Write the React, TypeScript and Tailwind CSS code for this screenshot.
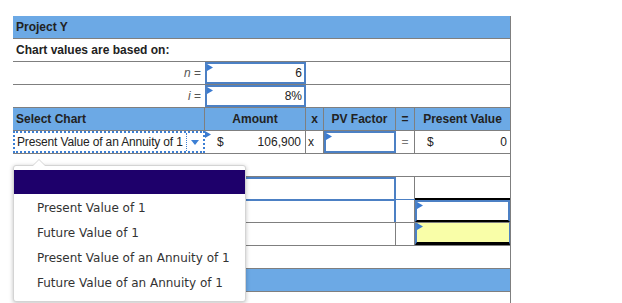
import React from "react";

const cols = "grid grid-cols-[192px_101px_18px_72px_19px_95px]";

function Flag() {
  return (
    <svg className="absolute left-0 top-0" width="6" height="7" viewBox="0 0 6 7">
      <path d="M0 0 L6 3.5 L0 7 Z" fill="#3b7bd0" />
    </svg>
  );
}

function Input({ children, className = "" }: { children?: React.ReactNode; className?: string }) {
  return (
    <div className={"relative h-full border-2 border-[#4c80c4] flex items-center justify-end pr-[2px] " + className}>
      <Flag />
      {children}
    </div>
  );
}

export default function App() {
  const options = [
    "Present Value of 1",
    "Future Value of 1",
    "Present Value of an Annuity of 1",
    "Future Value of an Annuity of 1",
  ];

  return (
    <div className="w-[622px] h-[303px] overflow-hidden bg-white pt-[16px] pl-[13px] text-[12px] text-[#222] font-['Liberation_Sans',Arial,sans-serif]">
      <div className="relative w-[498px] border-r border-[#7f7f7f]">
        <div className="h-[23px] bg-[#6ca9e5] border-b border-[#7f7f7f] flex items-center pl-[3px] font-bold">
          Project Y
        </div>
        <div className="h-[23px] border-b border-[#7f7f7f] flex items-center pl-[3px] font-bold">
          Chart values are based on:
        </div>
        <div className="h-[23px] border-b border-[#7f7f7f] flex">
          <div className="w-[192px] flex items-center justify-end pr-[4px] text-[#555]">
            <i>n</i>&nbsp;=
          </div>
          <Input className="w-[101px] -mb-px">6</Input>
        </div>
        <div className="h-[23px] border-b border-[#7f7f7f] flex">
          <div className="w-[192px] flex items-center justify-end pr-[4px] text-[#555]">
            <i>i</i>&nbsp;=
          </div>
          <Input className="w-[101px] -mb-px">8%</Input>
        </div>

        <div className={cols + " h-[23px] bg-[#6ca9e5] border-b border-[#7f7f7f] font-bold"}>
          <div className="flex items-center pl-[3px] border-r border-[#7f7f7f]">Select Chart</div>
          <div className="flex items-center justify-center border-r border-[#7f7f7f]">Amount</div>
          <div className="flex items-center justify-center border-r border-[#7f7f7f]">x</div>
          <div className="flex items-center justify-center border-r border-[#7f7f7f]">PV Factor</div>
          <div className="flex items-center justify-center border-r border-[#7f7f7f]">=</div>
          <div className="flex items-center justify-center">Present Value</div>
        </div>

        <div className={cols + " h-[23px] border-b border-[#7f7f7f]"}>
          <div className="flex border-2 border-dotted border-[#3c7fd4]">
            <div className="flex-1 flex items-center pl-[2px] whitespace-nowrap overflow-hidden tracking-[-0.15px]">
              Present Value of an Annuity of 1
            </div>
            <div className="w-[17px] border-l border-dotted border-[#3c7fd4] flex items-center justify-center">
              <svg width="8" height="5" viewBox="0 0 8 5">
                <path d="M0 0 H8 L4 5 Z" fill="#3c7fd4" />
              </svg>
            </div>
          </div>
          <div className="relative flex items-center justify-between px-[4px] border-r border-[#7f7f7f]">
            <Flag />
            <span className="pl-[8px]">$</span>
            <span>106,900</span>
          </div>
          <div className="flex items-center pl-[2px] border-r border-[#7f7f7f]">x</div>
          <Input className="border-r-2" />
          <div className="flex items-center justify-center border-r border-[#7f7f7f] text-[#777]">=</div>
          <div className="flex items-center justify-between pl-[12px] pr-[3px]">
            <span>$</span>
            <span>0</span>
          </div>
        </div>

        <div className="h-[23px] border-b border-[#7f7f7f]" />

        <div className={cols + " h-[23px] border-b border-[#4c80c4]"}>
          <div className="col-span-4 border-t-2 border-r-2 border-[#4c80c4]" />
          <div className="border-r border-[#7f7f7f]" />
          <div className="border-b-2 border-black -mb-px" />
        </div>
        <div className={cols + " h-[23px] border-b border-[#7f7f7f]"}>
          <div className="col-span-4 border-t border-r-2 border-[#4c80c4]" />
          <div className="border-r border-[#7f7f7f]" />
          <div className="relative border-2 border-[#4c80c4] border-b-black">
            <Flag />
          </div>
        </div>
        <div className={cols + " h-[23px] border-b border-[#7f7f7f]"}>
          <div className="col-span-4 border-r border-[#7f7f7f]" />
          <div className="border-r border-[#7f7f7f]" />
          <div className="relative bg-[#f9fea8] border-l-2 border-r border-[#4c80c4] border-b-[3px] border-b-black">
            <Flag />
          </div>
        </div>
        <div className="h-[23px] border-b border-[#7f7f7f]" />
        <div className="h-[23px] bg-[#6ca9e5] border-b border-[#7f7f7f]" />
        <div className="h-[23px] flex items-end pl-[3px] font-bold leading-none translate-y-[4px]">
          Future Value of an Annuity of 1
        </div>

        <div className="absolute left-0 top-[149px] w-[233px] h-[137px] bg-white border border-[#d4d4d4] rounded-[3px] shadow-[0_1px_4px_rgba(0,0,0,0.25)] font-['DejaVu_Sans',Verdana,sans-serif] text-[12px] text-[#333]">
          <div className="absolute -top-[7px] left-[18px] w-0 h-0 border-l-[7px] border-r-[7px] border-b-[7px] border-l-transparent border-r-transparent border-b-[#d4d4d4]" />
          <div className="absolute -top-[6px] left-[19px] w-0 h-0 border-l-[6px] border-r-[6px] border-b-[6px] border-l-transparent border-r-transparent border-b-white" />
          <div className="mt-[4px] h-[24px] bg-[#1e006b]" />
          <div className="pt-[1px]">
            {options.map((o) => (
              <div key={o} className="h-[25px] flex items-center pl-[23px]">
                {o}
              </div>
            ))}
          </div>
        </div>
      </div>
    </div>
  );
}
